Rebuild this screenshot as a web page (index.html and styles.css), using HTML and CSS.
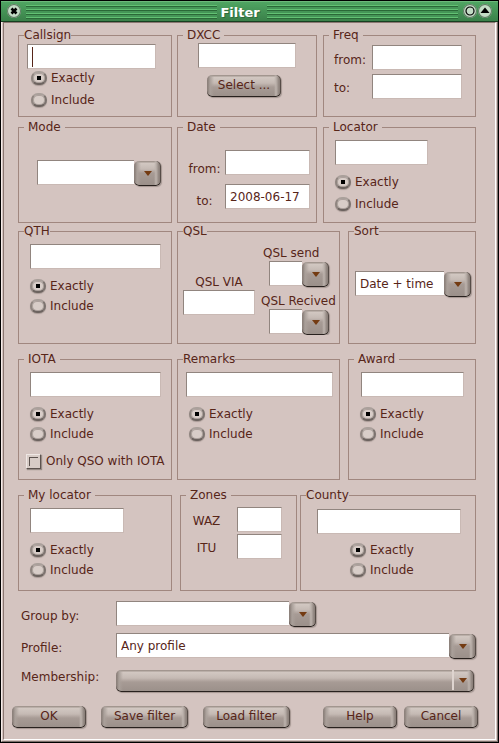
FILE: index.html
```html
<!DOCTYPE html>
<html lang="en">
<head>
<meta charset="utf-8">
<title>Filter</title>
<link rel="stylesheet" href="styles.css">
</head>
<body>
<div class="window">
  <header class="titlebar">
    <button class="orb" type="button" aria-label="Close"><svg viewBox="0 0 14 14"><path d="M4.5 4.5l5 5M9.5 4.5l-5 5" stroke="#000" stroke-width="2.6"/></svg></button>
    <span class="stripes"></span>
    <h1>Filter</h1>
    <span class="stripes"></span>
    <span class="orbs">
      <button class="orb" type="button" aria-label="Minimize"><svg viewBox="0 0 14 14"><circle cx="7" cy="7" r="4" fill="none" stroke="#000" stroke-width="1.2"/></svg></button>
      <button class="orb" type="button" aria-label="Maximize"><svg viewBox="0 0 14 14"><path d="M7 3.5L11.5 9h-9z" fill="#000"/></svg></button>
    </span>
  </header>
  <div class="frame">
  <form class="client">
    <div class="groups">
      <div class="row thirds">
        <fieldset class="callsign tight">
          <legend>Callsign</legend>
          <div class="caret-field"><input class="text" type="text" aria-label="Callsign"></div>
          <div class="radios loose">
            <label><input type="radio" name="call" checked>Exactly</label>
            <label><input type="radio" name="call">Include</label>
          </div>
        </fieldset>
        <fieldset class="dxcc">
          <legend>DXCC</legend>
          <input class="text" type="text" aria-label="DXCC">
          <button class="btn" type="button">Select ...</button>
        </fieldset>
        <fieldset class="freq">
          <legend>Freq</legend>
          <div class="pair">
            <div class="labels"><label for="ff">from:</label><label for="ft">to:</label></div>
            <div class="inputs"><input class="text" id="ff" type="text"><input class="text" id="ft" type="text"></div>
          </div>
        </fieldset>
      </div>
      <div class="row thirds second">
        <fieldset class="mode">
          <legend>Mode</legend>
          <div class="combo"><select aria-label="Mode"><option></option></select><span class="arrow"></span></div>
        </fieldset>
        <fieldset class="date">
          <legend>Date</legend>
          <div class="pair">
            <div class="labels"><label for="df">from:</label><label for="dt">to:</label></div>
            <div class="inputs"><input class="text" id="df" type="text"><input class="text" id="dt" type="text" value="2008-06-17"></div>
          </div>
        </fieldset>
        <fieldset class="locator">
          <legend>Locator</legend>
          <input class="text" type="text" aria-label="Locator">
          <div class="radios loose">
            <label><input type="radio" name="loc" checked>Exactly</label>
            <label><input type="radio" name="loc">Include</label>
          </div>
        </fieldset>
      </div>
      <div class="row wide third">
        <fieldset class="qth tight">
          <legend>QTH</legend>
          <input class="text" type="text" aria-label="QTH">
          <div class="radios">
            <label><input type="radio" name="qth" checked>Exactly</label>
            <label><input type="radio" name="qth">Include</label>
          </div>
        </fieldset>
        <fieldset class="qsl tight">
          <legend>QSL</legend>
          <div class="qsl-cols">
            <div class="via"><label for="via">QSL VIA</label><input class="text" id="via" type="text"></div>
            <div class="status">
              <label for="qs">QSL send</label>
              <div class="combo"><select id="qs"><option></option></select><span class="arrow"></span></div>
              <label for="qr">QSL Recived</label>
              <div class="combo"><select id="qr"><option></option></select><span class="arrow"></span></div>
            </div>
          </div>
        </fieldset>
        <fieldset class="sort tight">
          <legend>Sort</legend>
          <div class="combo"><select aria-label="Sort"><option>Date + time</option></select><span class="arrow"></span></div>
        </fieldset>
      </div>
      <div class="row wide fourth">
        <fieldset class="iota">
          <legend>IOTA</legend>
          <input class="text" type="text" aria-label="IOTA">
          <div class="radios">
            <label><input type="radio" name="iota" checked>Exactly</label>
            <label><input type="radio" name="iota">Include</label>
          </div>
          <label class="check"><input type="checkbox">Only QSO with IOTA</label>
        </fieldset>
        <fieldset class="remarks tight">
          <legend>Remarks</legend>
          <input class="text" type="text" aria-label="Remarks">
          <div class="radios">
            <label><input type="radio" name="rem" checked>Exactly</label>
            <label><input type="radio" name="rem">Include</label>
          </div>
        </fieldset>
        <fieldset class="award">
          <legend>Award</legend>
          <input class="text" type="text" aria-label="Award">
          <div class="radios">
            <label><input type="radio" name="aw" checked>Exactly</label>
            <label><input type="radio" name="aw">Include</label>
          </div>
        </fieldset>
      </div>
      <div class="row zoned fifth">
        <fieldset class="mylocator">
          <legend>My locator</legend>
          <input class="text" type="text" aria-label="My locator">
          <div class="radios">
            <label><input type="radio" name="my" checked>Exactly</label>
            <label><input type="radio" name="my">Include</label>
          </div>
        </fieldset>
        <fieldset class="zones">
          <legend>Zones</legend>
          <div class="pair">
            <div class="labels"><label for="waz">WAZ</label><label for="itu">ITU</label></div>
            <div class="inputs"><input class="text" id="waz" type="text"><input class="text" id="itu" type="text"></div>
          </div>
        </fieldset>
        <fieldset class="county tight">
          <legend>County</legend>
          <input class="text" type="text" aria-label="County">
          <div class="radios">
            <label><input type="radio" name="co" checked>Exactly</label>
            <label><input type="radio" name="co">Include</label>
          </div>
        </fieldset>
      </div>
      <div class="line group-by">
        <label for="gb">Group by:</label>
        <div class="combo"><select id="gb"><option></option></select><span class="arrow"></span></div>
      </div>
      <div class="line profile">
        <label for="pr">Profile:</label>
        <div class="combo"><select id="pr"><option>Any profile</option></select><span class="arrow"></span></div>
      </div>
      <div class="line member">
        <label for="mb">Membership:</label>
        <div class="flat"><select id="mb" class="btn"><option></option></select><span class="flat-arrow"></span></div>
      </div>
    </div>
    <footer class="actions">
      <div class="left">
        <button class="btn" type="button">OK</button>
        <button class="btn big" type="button">Save filter</button>
        <button class="btn big" type="button">Load filter</button>
      </div>
      <div class="right">
        <button class="btn" type="button">Help</button>
        <button class="btn" type="button">Cancel</button>
      </div>
    </footer>
  </form>
  </div>
</div>
</body>
</html>
```
FILE: styles.css
```css
* { box-sizing: border-box; }
body {
  margin: 0;
  background: #000;
  color: #572518;
  font: 12px/16px "DejaVu Sans", sans-serif;
}
input, select, button { font: inherit; color: inherit; margin: 0; }

.window {
  display: flex;
  flex-direction: column;
  min-height: 100vh;
  padding: 1px;
}

/* Title bar */
.titlebar {
  display: flex;
  align-items: center;
  gap: 5px;
  height: 21px;
  padding: 0 6px 2px;
  border-top: 1px solid #6cb87a;
  border-bottom: 1px solid #163f20;
  background: linear-gradient(#4fa562, #3a8049);
}
h1 {
  margin: 0 2px 0 -2px;
  padding: 5px 0 0;
  color: #fff;
  font-size: 13px;
  line-height: 16px;
  text-shadow: 1px 1px #2f6b3b;
}
.stripes {
  flex: 1;
  height: 14px;
  margin-top: 2px;
  background: repeating-linear-gradient(#62c173 0 1px, #2a6837 1px 2px, #459557 2px 4px);
}
.orbs { display: flex; gap: 1px; }
.orb {
  width: 14px;
  height: 14px;
  padding: 0;
  border: 0;
  border-radius: 50%;
  background: radial-gradient(#c3dcc5 50%, #9bb89e);
  box-shadow: 0 0 0 1px #5d7a61 inset;
}
.orb svg { display: block; }

/* Bevelled window frame */
.frame {
  flex: 1;
  display: flex;
  padding: 0 1px 1px;
  border: solid;
  border-width: 0 1px 1px;
  border-color: #7d706c #7d706c #7d706c #f6ebe8;
  background: #d4c4c0;
}
.client {
  flex: 1;
  padding-top: 5px;
  border: 1px solid;
  border-color: #8a7671 #fff #fff #8a7671;
}
.groups { padding: 0 19px 0 14px; }

/* Rows of groups: odd tracks hold the groups, even tracks the gaps */
.row { display: grid; }
.row > :nth-child(2) { grid-column: 3; }
.row > :nth-child(3) { grid-column: 5; }
.thirds { grid-template-columns: 154fr 5px 140fr 6px 153fr; }
.wide { grid-template-columns: 154fr 5px 163fr 8px 128fr; }
.zoned { grid-template-columns: 154fr 8px 117fr 3px 176fr; }
.second { margin-top: 3px; }
.third { margin-top: 1px; }
.fourth, .fifth { margin-top: 8px; }

fieldset {
  min-width: 0;
  margin: 0;
  padding: 0;
  border: 1px solid #a0877f;
}
legend {
  height: 15px;
  padding: 0 4px;
  line-height: 15px;
}
fieldset > legend { margin-left: 5px; }
.tight > legend { padding: 0; }

.text, .combo select {
  display: block;
  width: 100%;
  height: 25px;
  padding: 0 4px;
  border: 1px solid;
  border-color: #91857f #c9b9b4 #c9b9b4 #91857f;
  border-radius: 0;
  background: #fff;
  outline: 0;
}
.combo { display: flex; align-items: flex-end; height: 26px; }
.combo select {
  flex: 1;
  align-self: flex-start;
  min-width: 0;
  appearance: none;
  border-right: 0;
}

/* Bevelled buttons */
.btn, .arrow {
  border: 0;
  border-radius: 5px;
  background:
    linear-gradient(90deg, #8d827c 0 1px, #aaa09a 3px, transparent 7px calc(100% - 7px), #bdb3ad calc(100% - 5px), #8d827c calc(100% - 2px)),
    linear-gradient(#a2968f 0 1px, #d2c8c2 2px, #c5bab4 8px, #a79b95 12px, #9a8f89 100%);
  box-shadow: inset 0 -1px #28211e, inset -1px 0 #564c47, 1px 1px 1px #a39590;
}
.btn {
  width: 74px;
  height: 22px;
  padding: 0 0 2px;
  line-height: 16px;
}
.big { width: 87px; }
.arrow {
  display: grid;
  place-items: center;
  width: 27px;
  height: 25px;
}
.arrow::before, .flat-arrow::before {
  content: "";
  border: solid transparent;
  border-width: 5px 4px 0;
  border-top-color: #743b12;
}

/* Radios and tick boxes */
.radios { display: grid; gap: 2px; margin: 8px 0 0; }
.radios.loose { gap: 4px; }
.radios label, .check {
  display: flex;
  align-items: center;
  gap: 4px;
  height: 18px;
}
input[type="radio"] {
  appearance: none;
  width: 16px;
  height: 14px;
  border: 2px solid;
  border-color: #aaa09b #7c736f #6c635f #8f8580;
  border-radius: 7px;
  background: #d8cdc8;
  box-shadow: inset 0 0 0 1px #aca19c, 0 1px 1px #a99b96;
}
input[type="radio"]:checked {
  background: linear-gradient(#000, #000) center / 4px 4px no-repeat #d8cdc8;
}
input[type="checkbox"] {
  appearance: none;
  width: 15px;
  height: 15px;
  border: 1px solid;
  border-color: #efe7e4 #5c524e #5c524e #efe7e4;
  background:
    linear-gradient(#5c524e, #5c524e) 2px 2px / 9px 1px no-repeat,
    linear-gradient(#5c524e, #5c524e) 2px 2px / 1px 9px no-repeat,
    #d8ccc7;
  box-shadow: 1px 1px 1px #968a85;
}

/* Label and input columns */
.pair { display: flex; }
.labels, .inputs { display: flex; flex-direction: column; }
.inputs { flex: 1; min-width: 0; }

.callsign .caret-field { position: relative; margin: 1px 15px 0 8px; }
.caret-field::after {
  content: "";
  position: absolute;
  left: 5px;
  top: 3px;
  width: 1px;
  height: 20px;
  background: #572518;
}
.callsign { padding-bottom: 7px; }
.callsign .radios { margin: 0 0 0 12px; }

.dxcc { padding: 0 20px; }
.dxcc > legend { margin-left: -15px; }
.dxcc .btn { display: block; margin: 7px auto 0 9px; }

.freq .pair { padding: 2px 13px 0 10px; }
.freq .labels { width: 38px; gap: 12px; padding-top: 7px; }
.freq .inputs { gap: 4px; }

.mode .combo { margin: 25px 10px 0 18px; }

.date .pair { padding: 15px 6px 0 10px; }
.date .labels { width: 37px; gap: 16px; padding: 11px 4px 0 0; text-align: center; }
.date .inputs { gap: 9px; }

.locator { padding-bottom: 9px; }
.locator > .text { width: calc(100% - 58px); margin: 5px 0 0 11px; }
.locator .radios { margin-left: 11px; }

.qth > .text, .iota > .text { width: calc(100% - 21px); margin: 5px 0 0 11px; }
.qth .radios, .iota .radios, .mylocator .radios { margin-left: 11px; }

.qsl-cols { display: flex; gap: 6px; padding: 6px 2px 8px 5px; }
.qsl label { display: block; white-space: nowrap; }
.via { flex: 1; padding-top: 29px; text-align: center; }
.status { width: 76px; overflow: hidden; }
.status .combo { width: 60px; margin-left: 8px; }
.status .combo + label { margin-top: 6px; }
.status label:first-child { padding-left: 2px; }

.sort .combo { margin: 32px 4px 0 6px; }

.iota { padding-bottom: 9px; }
.iota > .text, .remarks > .text, .award > .text { margin-top: 5px; }
.check { gap: 5px; margin: 9px 0 0 7px; white-space: nowrap; }
.remarks > .text { width: calc(100% - 14px); margin-left: 8px; }
.remarks .radios { margin-left: 11px; }
.award > .text { width: calc(100% - 23px); margin-left: 12px; }
.award .radios { margin-left: 11px; }

.mylocator { padding-bottom: 11px; }
.mylocator > .text { width: calc(100% - 58px); margin: 5px 0 0 11px; }
.zones .pair { padding: 4px 14px 0 8px; }
.zones .labels { width: 48px; gap: 11px; padding: 6px 13px 0 0; text-align: center; }
.zones .inputs { gap: 2px; }
.county > .text { width: calc(100% - 30px); margin: 6px 0 0 16px; }
.county .radios { margin: 7px 0 0 49px; }

/* Labelled lines below the groups */
.line { display: flex; }
.line > label { width: 98px; padding: 7px 0 0 3px; }
.line > .combo, .line > .flat { flex: 1; min-width: 0; }
.group-by { margin-top: 10px; }
.group-by > .combo { flex: 0 1 200px; }
.profile { margin-top: 6px; }
.member { margin-top: 3px; }
.flat { position: relative; margin-right: 2px; padding-top: 8px; }
.flat select { appearance: none; display: block; width: 100%; }
.flat-arrow {
  position: absolute;
  top: 8px;
  right: 0;
  display: grid;
  place-items: center;
  width: 22px;
  height: 20px;
  padding-right: 2px;
  border-left: 2px solid #ded4cf;
  pointer-events: none;
}

.actions {
  display: flex;
  justify-content: space-between;
  padding: 14px 17px 10px 8px;
}
.left { display: flex; gap: 15px; }
.right { display: flex; gap: 7px; }
```
